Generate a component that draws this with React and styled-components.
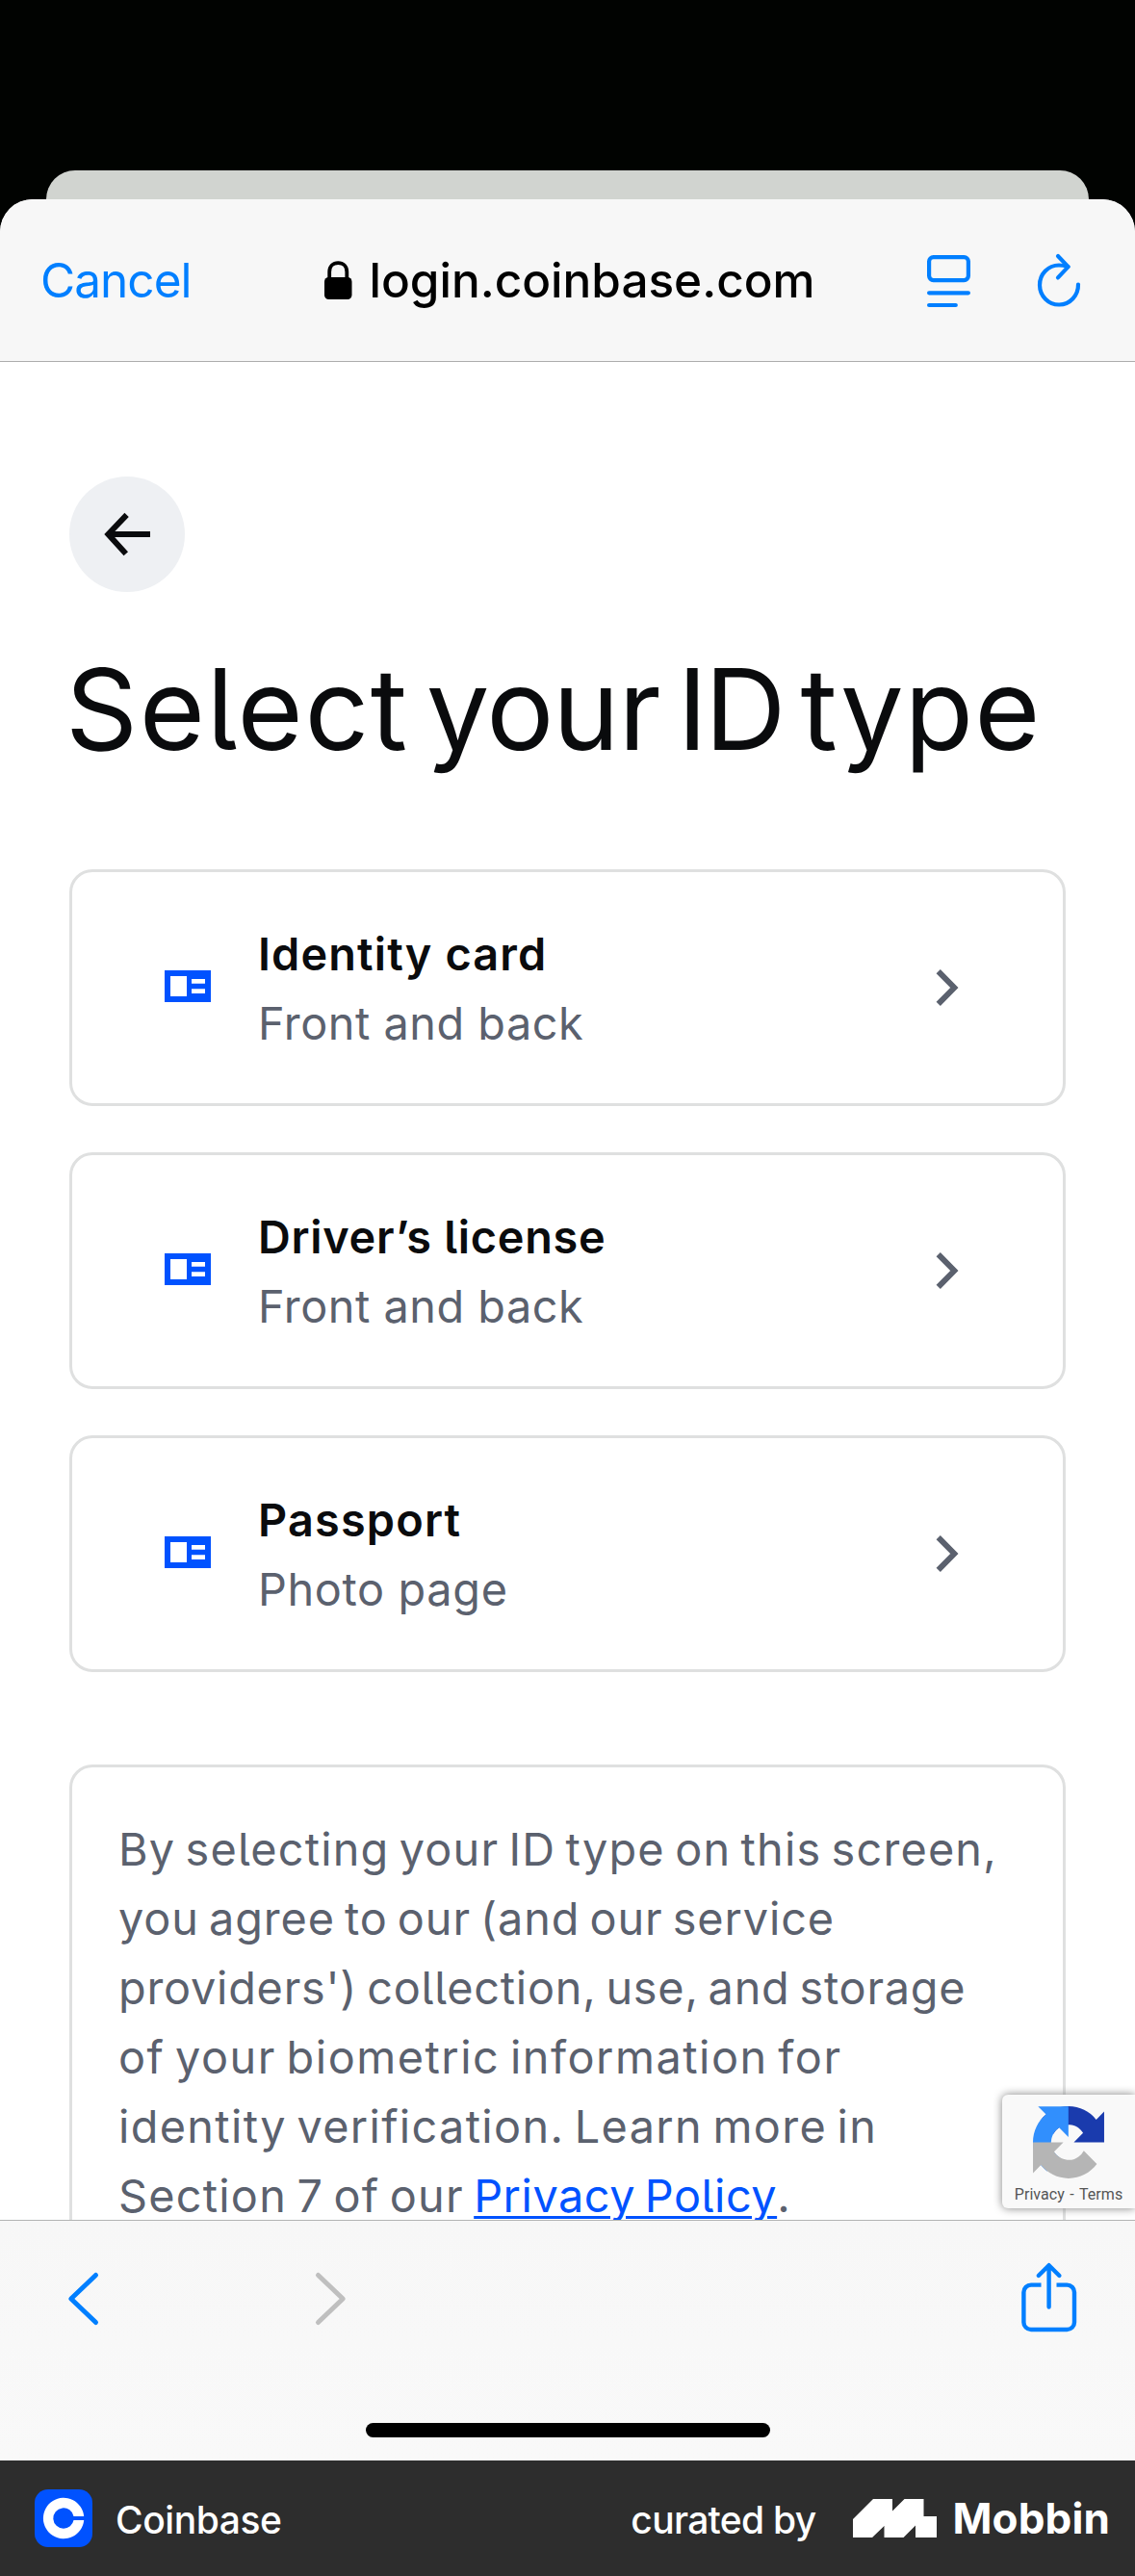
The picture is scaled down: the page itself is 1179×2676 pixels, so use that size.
import React from 'react';
import styled, { createGlobalStyle } from 'styled-components';

const GlobalStyle = createGlobalStyle`
  *, *::before, *::after { box-sizing: border-box; }
  body {
    margin: 0;
    background: #010301;
    font-family: Inter, Roboto, sans-serif;
  }
  svg { display: block; flex: none; overflow: visible; }
`;

const Screen = styled.div`
  display: flex;
  flex-direction: column;
  width: 1179px;
  height: 2676px;
  overflow: hidden;
  background: #010301;
`;

const Backdrop = styled.div`
  display: flex;
  flex: none;
  align-items: flex-end;
  justify-content: center;
  height: 207px;
`;

const PreviousSheet = styled.div`
  width: 1083px;
  height: 30px;
  border-radius: 30px 30px 0 0;
  background: #d1d4d0;
`;

const Sheet = styled.section`
  display: flex;
  flex: none;
  flex-direction: column;
  height: 2349px;
  overflow: hidden;
  border-radius: 34px 34px 0 0;
  background: #fff;
`;

const BrowserHeader = styled.header`
  display: grid;
  flex: none;
  grid-template-columns: 295px 1fr auto;
  align-items: center;
  height: 169px;
  padding: 0 57px 0 42px;
  border-bottom: 1px solid #adadad;
  background: #f7f7f7;
`;

const CancelButton = styled.button`
  padding: 0;
  border: 0;
  background: none;
  color: #007fff;
  font: 400 49.5px/60px Inter, sans-serif;
  letter-spacing: -0.95px;
  text-align: left;
`;

const Address = styled.div`
  display: flex;
  align-items: center;
  gap: 18px;
  color: #000;
  font-size: 49.5px;
  font-weight: 500;
  line-height: 60px;
  letter-spacing: -0.02px;
  white-space: nowrap;
`;

const HeaderActions = styled.div`
  display: flex;
  align-items: center;
  gap: 70px;
  color: #007fff;
`;

const Content = styled.main`
  position: relative;
  flex: none;
  height: 1930px;
  padding: 119px 72px 0;
  overflow: hidden;
`;

const BackButton = styled.button`
  display: flex;
  align-items: center;
  justify-content: center;
  width: 120px;
  height: 120px;
  padding: 0;
  border: 0;
  border-radius: 50%;
  background: #eef0f3;
`;

const Heading = styled.h1`
  margin: 56px 0 100px;
  color: #0a0b0d;
  font-size: 117px;
  font-weight: 400;
  line-height: 132px;
  letter-spacing: -0.4px;
  word-spacing: -14.5px;
  font-feature-settings: 'cv05';
  white-space: nowrap;
  text-indent: -4px;
`;

const Word = styled.span`
  letter-spacing: ${(p) => p.$tracking}px;
`;

const OptionList = styled.div`
  display: flex;
  flex-direction: column;
  gap: 48px;
`;

const Option = styled.div`
  display: flex;
  align-items: center;
  gap: 48px;
  height: 246px;
  padding: 0 108px 0 96px;
  border: 3px solid #dfe0e0;
  border-radius: 24px;
`;

const OptionIcon = styled.svg`
  margin-bottom: 3px;
`;

const OptionText = styled.div`
  display: flex;
  flex: 1;
  flex-direction: column;
  padding: 2px 0 0 1px;
  font-size: 46.8px;
  line-height: 72px;
  font-feature-settings: 'cv05';
`;

const OptionTitle = styled.div`
  color: #0a0b0d;
  font-weight: 600;
  letter-spacing: ${(p) => p.$tracking}px;
`;

const OptionDetail = styled.div`
  color: #5b616e;
  letter-spacing: ${(p) => p.$tracking}px;
`;

const Disclosure = styled.div`
  margin-top: 96px;
  height: 620px;
  padding: 49px 48px;
  border: 3px solid #dfe0e0;
  border-radius: 24px;
  color: #5b616e;
  font-size: 46.8px;
  line-height: 72px;
  word-spacing: -4px;
  font-feature-settings: 'cv05';
  white-space: nowrap;
`;

const Line = styled.div`
  letter-spacing: ${(p) => p.$tracking}px;
`;

const PolicyLink = styled.a`
  color: #0052ff;
  letter-spacing: 0.55px;
  text-decoration: underline;
  text-decoration-thickness: 3px;
  text-underline-offset: 4px;
`;

const CaptchaBadge = styled.aside`
  position: absolute;
  top: 1800px;
  right: 0;
  display: flex;
  flex-direction: column;
  align-items: center;
  width: 138px;
  height: 118px;
  padding-top: 12px;
  border-radius: 6px 0 0 6px;
  background: #f9f9f9;
  box-shadow: 0 0 10px #808080;
`;

const CaptchaLinks = styled.div`
  margin-top: 6px;
  color: #555;
  font: 400 16px/22px Roboto, sans-serif;
  letter-spacing: 0.05px;
  word-spacing: 1.5px;
  white-space: nowrap;
`;

const BrowserToolbar = styled.footer`
  display: flex;
  flex: none;
  flex-direction: column;
  justify-content: space-between;
  align-items: center;
  height: 250px;
  padding: 44px 0 24px;
  border-top: 1px solid #b2b4b4;
  background: linear-gradient(#f7f7f7, #f9f9f9);
`;

const ToolbarRow = styled.div`
  display: flex;
  align-items: center;
  width: 100%;
  padding: 0 60px 0 71px;
`;

const HistoryIcon = styled.svg`
  margin: 2px 0 0 ${(p) => p.$before}px;
`;

const ShareIcon = styled.svg`
  margin-left: auto;
`;

const HomeIndicator = styled.div`
  width: 420px;
  height: 15px;
  border-radius: 8px;
  background: #000;
`;

const CreditBar = styled.div`
  display: flex;
  flex: none;
  align-items: center;
  height: 120px;
  padding: 0 26px 0 36px;
  background: #2d2d2d;
  color: #fff;
`;

const CreditText = styled.span`
  padding: 3px 0 0 ${(p) => p.$before || 0}px;
  font-size: 39px;
  font-weight: 500;
  letter-spacing: ${(p) => p.$tracking}px;
`;

const Curator = styled.div`
  display: flex;
  align-items: center;
  margin-left: auto;
`;

const MobbinMark = styled.svg`
  margin: 0 17px 0 38px;
`;

const MobbinName = styled.span`
  font-size: 44px;
  font-weight: 700;
  letter-spacing: 0.12px;
`;

const LockIcon = () => (
  <svg width="28.5" height="40" viewBox="0 0 28.5 40">
    <rect x="0" y="17" width="28.5" height="23" rx="4.5" fill="currentColor" />
    <path d="M5.2 18V11.5C5.2 5.6 9 2.2 14.25 2.2S23.3 5.6 23.3 11.5V18" fill="none" stroke="currentColor" strokeWidth="3.8" />
  </svg>
);

const ReaderIcon = () => (
  <svg width="45" height="54" viewBox="0 -1 45 54" fill="none" stroke="currentColor" strokeWidth="4.2" strokeLinecap="round">
    <rect x="2.1" y="2.1" width="40.8" height="24" rx="4.5" />
    <path d="M2.1 39.3H42.9M2.1 52H29.8" />
  </svg>
);

const ReloadIcon = () => (
  <svg width="44" height="54" viewBox="0 0 44 54" fill="none" stroke="currentColor" strokeWidth="4.2" strokeLinecap="round" strokeLinejoin="round">
    <path d="M42 31.5A20 20.5 0 1 1 22 11.5C26 11.5 28.5 12.2 31.5 13" />
    <path d="M21 2L31.6 13.1L21 24.4" />
  </svg>
);

const BackArrow = () => (
  <svg width="48" height="44" viewBox="0 0 48 44" fill="none" stroke="#0a0b0d" strokeWidth="6">
    <path d="M23.6 1.9L4.4 22L22.8 42.2M4.4 22H48" />
  </svg>
);

const IdIcon = () => (
  <OptionIcon width="48" height="33" viewBox="0 0 48 33">
    <path fill="#0052ff" fillRule="evenodd" d="M0 0H48V33H0ZM6 6V27H23V6ZM28 9V13.8H42V9ZM28 19.2V24H42V19.2Z" />
  </OptionIcon>
);

const Chevron = () => (
  <svg width="24" height="38" viewBox="0 0 24 38" fill="none" stroke="#5b616e" strokeWidth="6">
    <path d="M2.7 2.1L19.3 19L2.7 35.9" />
  </svg>
);

const CaptchaLogo = () => (
  <svg width="74" height="75" viewBox="0 0 64 64" preserveAspectRatio="none">
    <path fill="#1a3bad" d="M64 31.955l-.033-1.37V4.687l-7.16 7.16C50.948 4.674 42.033.093 32.05.093c-10.4 0-19.622 4.96-25.458 12.64l11.736 11.86a15.55 15.55 0 0 1 4.754-5.334c2.05-1.6 4.952-2.906 8.968-2.906.485 0 .86.057 1.135.163 4.976.393 9.288 3.14 11.828 7.124l-8.307 8.307L64 31.953" />
    <path fill="#318ffd" d="M31.862.094l-1.37.033H4.594l7.16 7.16C4.58 13.147 0 22.06 0 32.046c0 10.4 4.96 19.622 12.64 25.458L24.5 45.768a15.55 15.55 0 0 1-5.334-4.754c-1.6-2.05-2.906-4.952-2.906-8.968 0-.485.057-.86.163-1.135.393-4.976 3.14-9.288 7.124-11.828l8.307 8.307L31.86.095" />
    <path fill="#b5b5b5" d="M.001 32.045l.033 1.37v25.898l7.16-7.16c5.86 7.173 14.774 11.754 24.76 11.754 10.4 0 19.622-4.96 25.458-12.64l-11.736-11.86a15.55 15.55 0 0 1-4.754 5.334c-2.05 1.6-4.952 2.906-8.968 2.906-.485 0-.86-.057-1.135-.163-4.976-.393-9.288-3.14-11.828-7.124l8.307-8.307L0 32.047" />
  </svg>
);

const CoinbaseLogo = () => (
  <svg width="60" height="60" viewBox="0 0 60 60">
    <rect width="60" height="60" rx="14" fill="#0052ff" />
    <path fill="#fff" d="M30 40.7A10.7 10.7 0 1 1 40.5 28H51.2A21.2 21.2 0 1 0 51.2 32H40.5A10.7 10.7 0 0 1 30 40.7Z" />
  </svg>
);

const options = [
  { title: 'Identity card', titleTracking: 1.15, detail: 'Front and back', detailTracking: 0.53 },
  { title: 'Driver’s license', titleTracking: 0.73, detail: 'Front and back', detailTracking: 0.53 },
  { title: 'Passport', titleTracking: 1.2, detail: 'Photo page', detailTracking: 0.65 },
];

export default function App() {
  return (
    <>
      <GlobalStyle />
      <Screen>
        <Backdrop>
          <PreviousSheet />
        </Backdrop>
        <Sheet>
          <BrowserHeader>
            <CancelButton>Cancel</CancelButton>
            <Address>
              <LockIcon />
              <span>login.coinbase.com</span>
            </Address>
            <HeaderActions>
              <ReaderIcon />
              <ReloadIcon />
            </HeaderActions>
          </BrowserHeader>

          <Content>
            <BackButton aria-label="Back">
              <BackArrow />
            </BackButton>
            <Heading>
              <Word $tracking={1.6}>Select</Word> <Word $tracking={-1}>your</Word>{' '}
              <Word $tracking={-3}>ID</Word> <Word $tracking={0.9}>type</Word>
            </Heading>
            <OptionList>
              {options.map((o) => (
                <Option key={o.title}>
                  <IdIcon />
                  <OptionText>
                    <OptionTitle $tracking={o.titleTracking}>{o.title}</OptionTitle>
                    <OptionDetail $tracking={o.detailTracking}>{o.detail}</OptionDetail>
                  </OptionText>
                  <Chevron />
                </Option>
              ))}
            </OptionList>
            <Disclosure>
              <Line $tracking={1.18}>By selecting your ID type on this screen,</Line>
              <Line $tracking={0.92}>you agree to our (and our service</Line>
              <Line $tracking={0.78}>providers') collection, use, and storage</Line>
              <Line $tracking={1.52}>of your biometric information for</Line>
              <Line $tracking={1.35}>identity verification. Learn more in</Line>
              <Line $tracking={1.23}>
                Section 7 of our <PolicyLink>Privacy Policy</PolicyLink>.
              </Line>
            </Disclosure>
            <CaptchaBadge>
              <CaptchaLogo />
              <CaptchaLinks>Privacy - Terms</CaptchaLinks>
            </CaptchaBadge>
          </Content>

          <BrowserToolbar>
            <ToolbarRow>
              <HistoryIcon $before={0} width="31" height="54" viewBox="0 0 31 54" fill="none" stroke="#007fff" strokeWidth="5" strokeLinecap="round" strokeLinejoin="round">
                <path d="M28.5 2.5L2.8 27L28.5 51.5" />
              </HistoryIcon>
              <HistoryIcon $before={226} width="31" height="54" viewBox="0 0 31 54" fill="none" stroke="#bfbfbf" strokeWidth="5" strokeLinecap="round" strokeLinejoin="round">
                <path d="M2.5 2.5L28.2 27L2.5 51.5" />
              </HistoryIcon>
              <ShareIcon width="58" height="72" viewBox="0 0 58 72" fill="none" stroke="#007fff" strokeWidth="4.4" strokeLinecap="round" strokeLinejoin="round">
                <path strokeLinecap="butt" d="M20.5 22.6H10A7.6 7.6 0 0 0 2.4 30.2V61.4A7.6 7.6 0 0 0 10 69H47.4A7.6 7.6 0 0 0 55 61.4V30.2A7.6 7.6 0 0 0 47.4 22.6H36.5" />
                <path d="M28.6 45.5V2.6M17.8 13L28.6 2.2L39.4 13" />
              </ShareIcon>
            </ToolbarRow>
            <HomeIndicator />
          </BrowserToolbar>
        </Sheet>

        <CreditBar>
          <CoinbaseLogo />
          <CreditText $before={24} $tracking={-0.44}>Coinbase</CreditText>
          <Curator>
            <CreditText $tracking={-0.7}>curated by</CreditText>
            <MobbinMark width="87" height="40" viewBox="0 0 87 40" fill="#fff">
              <path d="M21 0H41V12.5L53.5 0H73.5V18H87V40H65V27.5L52.5 40H32.5V28L20 40H0V21Z" />
            </MobbinMark>
            <MobbinName>Mobbin</MobbinName>
          </Curator>
        </CreditBar>
      </Screen>
    </>
  );
}
